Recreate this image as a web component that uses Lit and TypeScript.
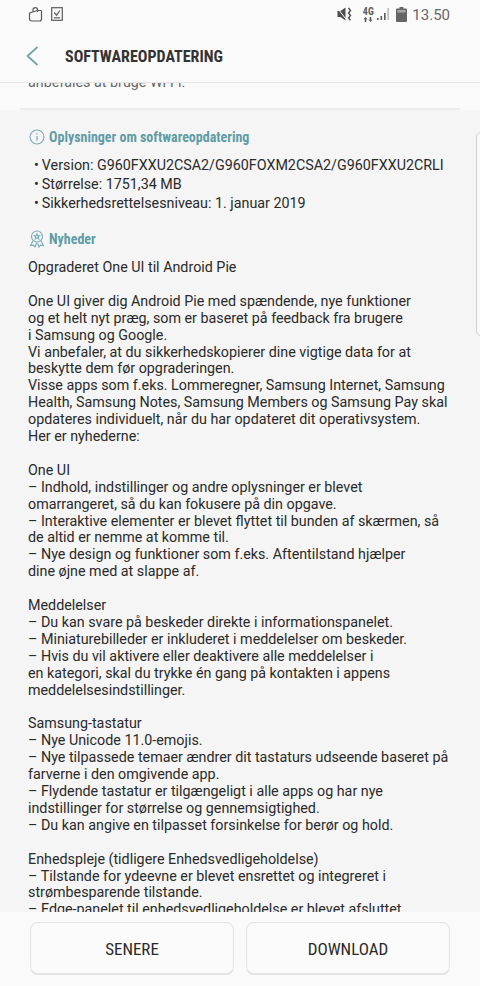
import { LitElement, html, css } from "lit";
import { customElement } from "lit/decorators.js";

const blocks: string[][] = [
  ["Opgraderet One UI til Android Pie"],
  [
    "One UI giver dig Android Pie med spændende, nye funktioner",
    "og et helt nyt præg, som er baseret på feedback fra brugere",
    "i Samsung og Google.",
    "Vi anbefaler, at du sikkerhedskopierer dine vigtige data for at",
    "beskytte dem før opgraderingen.",
    "Visse apps som f.eks. Lommeregner, Samsung Internet, Samsung",
    "Health, Samsung Notes, Samsung Members og Samsung Pay skal",
    "opdateres individuelt, når du har opdateret dit operativsystem.",
    "Her er nyhederne:",
  ],
  [
    "One UI",
    "– Indhold, indstillinger og andre oplysninger er blevet",
    "omarrangeret, så du kan fokusere på din opgave.",
    "– Interaktive elementer er blevet flyttet til bunden af skærmen, så",
    "de altid er nemme at komme til.",
    "– Nye design og funktioner som f.eks. Aftentilstand hjælper",
    "dine øjne med at slappe af.",
  ],
  [
    "Meddelelser",
    "– Du kan svare på beskeder direkte i informationspanelet.",
    "– Miniaturebilleder er inkluderet i meddelelser om beskeder.",
    "– Hvis du vil aktivere eller deaktivere alle meddelelser i",
    "en kategori, skal du trykke én gang på kontakten i appens",
    "meddelelsesindstillinger.",
  ],
  [
    "Samsung-tastatur",
    "– Nye Unicode 11.0-emojis.",
    "– Nye tilpassede temaer ændrer dit tastaturs udseende baseret på",
    "farverne i den omgivende app.",
    "– Flydende tastatur er tilgængeligt i alle apps og har nye",
    "indstillinger for størrelse og gennemsigtighed.",
    "– Du kan angive en tilpasset forsinkelse for berør og hold.",
  ],
  [
    "Enhedspleje (tidligere Enhedsvedligeholdelse)",
    "– Tilstande for ydeevne er blevet ensrettet og integreret i",
    "strømbesparende tilstande.",
    "– Edge-panelet til enhedsvedligeholdelse er blevet afsluttet.",
  ],
];

@customElement("app-root")
export class AppRoot extends LitElement {
  static styles = css`
    :host {
      display: flex;
      flex-direction: column;
      width: 480px;
      height: 986px;
      overflow: hidden;
      background: #fafafa;
      font-family: Roboto, "Noto Sans", sans-serif;
      color: #2a2a2a;
    }
    .status {
      flex: none;
      height: 33px;
      display: flex;
      align-items: center;
      padding: 0 30px 5px 28px;
      box-sizing: border-box;
      color: #5c5c5c;
    }
    .status .left { display: flex; gap: 8px; align-items: center; }
    .status .right { margin-left: auto; display: flex; align-items: center; }
    .net {
      margin-left: 9px;
      width: 12px;
      display: flex;
      flex-direction: column;
      align-items: center;
      gap: 1px;
    }
    .net span {
      font-size: 10px;
      line-height: 9px;
      font-weight: 700;
      font-stretch: condensed;
      color: #5c5c5c;
    }
    .signal { margin-left: 3px; }
    .batt { margin-left: 5px; }
    .time {
      font-size: 15px;
      margin-left: 5px;
      color: #666;
      padding-top: 1px;
    }
    svg { display: block; }
    .header {
      flex: none;
      height: 50px;
      display: flex;
      align-items: center;
      padding: 0 0 3px 26px;
      box-sizing: border-box;
      border-bottom: 1px solid #e6e6e6;
      gap: 26px;
    }
    .title {
      font-size: 16px;
      font-weight: 700;
      font-stretch: condensed;
      color: #333;
    }
    .scroll {
      flex: 1;
      min-height: 0;
      overflow: hidden;
      position: relative;
    }
    .clip-text {
      font-size: 14.3px;
      line-height: 17px;
      color: #666;
      padding: 0 28px;
      margin-top: -9px;
    }
    .rule {
      margin: 17px 20px 0;
      height: 2px;
      background: #ececec;
    }
    .sheet {
      background: #f5f5f5;
      padding: 17px 28px 0;
      font-size: 14.3px;
      line-height: 16.9px;
    }
    .thumb {
      position: absolute;
      right: -6px;
      top: 49px;
      width: 10px;
      height: 204px;
      box-sizing: border-box;
      border: 1px solid #cfcfcf;
      border-radius: 5px;
      background: #fafafa;
    }
    .head {
      display: flex;
      align-items: center;
      gap: 4px;
      font-size: 14px;
      font-weight: 700;
      font-stretch: condensed;
      color: #5f9ca6;
      height: 20px;
      margin-left: 1px;
    }
    .bullets { margin-top: 9px; margin-bottom: 16px; }
    .bullet { display: flex; gap: 3px; height: 19px; line-height: 19px; margin-left: 6px; }
    .para { margin-top: 16.9px; white-space: nowrap; }
    .para.first { margin-top: 10px; }
    .footer {
      flex: none;
      height: 74px;
      box-sizing: border-box;
      padding: 10px 30px 0;
      display: grid;
      grid-template-columns: 1fr 1fr;
      gap: 12px;
      align-content: start;
      background: #fafafa;
    }
    .btn {
      height: 53px;
      box-sizing: border-box;
      border: 1px solid #e3e3e3;
      border-bottom-width: 2px;
      border-radius: 8px;
      background: #fbfbfb;
      display: flex;
      align-items: center;
      justify-content: center;
      font-size: 17px;
      font-stretch: condensed;
      color: #2a2a2a;
      padding-top: 1px;
    }
  `;

  render() {
    return html`
      <div class="status">
        <div class="left">
          <svg width="15" height="15" viewBox="0 0 15 15" fill="none" stroke="#5c5c5c" stroke-width="1.2">
            <path d="M1.5 6 9.5 3.5H12.5A1 1 0 0 1 13.5 4.5V12A2 2 0 0 1 11.5 14H3.5A2 2 0 0 1 1.5 12Z" />
            <path d="M5 5V3A2.3 2.3 0 0 1 9.6 3V5" />
          </svg>
          <svg width="12" height="14" viewBox="0 0 12 14" fill="none" stroke="#5c5c5c" stroke-width="1.2">
            <rect x="0.7" y="0.7" width="10.6" height="12.6" />
            <path d="M3.2 5.5 5.5 8.2 8.8 3.5" />
            <path d="M3 10.8h6" />
          </svg>
        </div>
        <div class="right">
          <svg width="16" height="14" viewBox="0 0 16 14" fill="#4f4f4f">
            <path d="M0.5 4H3.5L8.5 0.5V13.5L3.5 10H0.5Z" />
            <path d="M0 0.5 10 13.5" stroke="#fafafa" stroke-width="1" />
            <path d="M11.5 1 13.5 3.5 11.5 6 13.5 8.5 11.5 11 13.5 13.2" fill="none" stroke="#4f4f4f" stroke-width="1.4" />
          </svg>
          <div class="net">
            <span>4G</span>
            <svg width="10" height="5" viewBox="0 0 10 5" fill="#5c5c5c">
              <path d="M2.5 0 4.5 2.2H3.3V5H1.7V2.2H0.5Z" />
              <path d="M7.5 5 5.5 2.8H6.7V0H8.3V2.8H9.5Z" />
            </svg>
          </div>
          <svg class="signal" width="14" height="14" viewBox="0 0 14 14" fill="#5c5c5c">
            <rect x="0" y="11" width="1.6" height="2" />
            <rect x="3.5" y="9" width="1.6" height="4" />
            <rect x="7" y="6" width="1.6" height="7" />
            <rect x="10.5" y="1" width="1.2" height="12" fill="#a6a6a6" />
          </svg>
          <svg class="batt" width="11" height="15" viewBox="0 0 11 15" fill="#666">
            <path d="M3.5 0H7.5V1.5H10A1 1 0 0 1 11 2.5V14A1 1 0 0 1 10 15H1A1 1 0 0 1 0 14V2.5A1 1 0 0 1 1 1.5H3.5Z" />
            <rect x="1.5" y="3" width="8" height="2.5" fill="#a8a8a8" />
          </svg>
          <span class="time">13.50</span>
        </div>
      </div>
      <div class="header">
        <svg width="13" height="20" viewBox="0 0 13 20" fill="none" stroke="#6ba3ab" stroke-width="1.7">
          <path d="M11.5 1 1.5 10 11.5 19" />
        </svg>
        <div class="title">SOFTWAREOPDATERING</div>
      </div>
      <div class="scroll">
        <div class="clip-text">anbefales at bruge Wi-Fi.</div>
        <div class="rule"></div>
        <div class="sheet">
          <div class="head">
            <svg width="16" height="16" viewBox="0 0 16 16" fill="none" stroke="#79adb5" stroke-width="1.1">
              <circle cx="8" cy="8" r="7" />
              <path d="M8 7v4.5M8 4.2v1.3" stroke-width="1.3" />
            </svg>
            Oplysninger om softwareopdatering
          </div>
          <div class="bullets">
            <div class="bullet"><span>•</span><span>Version: G960FXXU2CSA2/G960FOXM2CSA2/G960FXXU2CRLI</span></div>
            <div class="bullet"><span>•</span><span>Størrelse: 1751,34 MB</span></div>
            <div class="bullet"><span>•</span><span>Sikkerhedsrettelsesniveau: 1. januar 2019</span></div>
          </div>
          <div class="head">
            <svg width="16" height="18" viewBox="0 0 16 18" fill="none" stroke="#79adb5" stroke-width="1.1">
              <circle cx="8" cy="6.5" r="5.5" />
              <path d="M8 3.8 8.8 5.7 10.8 5.8 9.2 7.1 9.8 9 8 7.9 6.2 9 6.8 7.1 5.2 5.8 7.2 5.7Z" />
              <path d="M4 11 1.5 15.5 4.5 15.2 6 17 7.5 13M12 11 14.5 15.5 11.5 15.2 10 17 8.5 13" />
            </svg>
            Nyheder
          </div>
          ${blocks.map(
            (b, i) => html`<div class="para ${i === 0 ? "first" : ""}">
              ${b.map((l) => html`<div>${l}</div>`)}
            </div>`
          )}
        </div>
        <div class="thumb"></div>
      </div>
      <div class="footer">
        <div class="btn">SENERE</div>
        <div class="btn">DOWNLOAD</div>
      </div>
    `;
  }
}
